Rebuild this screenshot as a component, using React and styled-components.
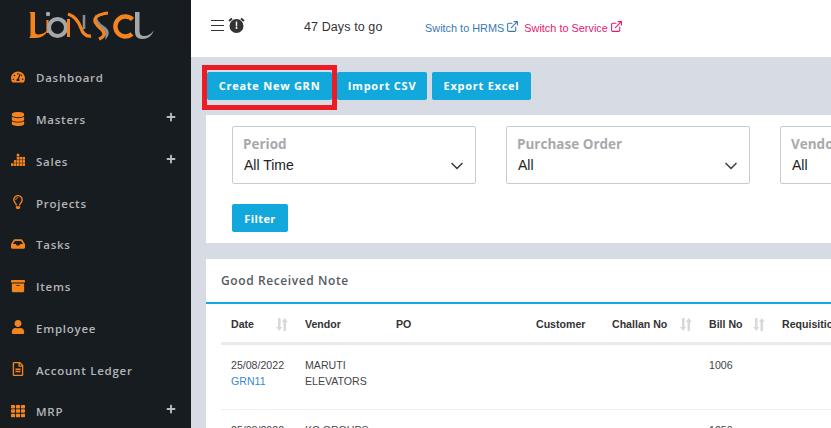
import React from 'react';
import styled, { createGlobalStyle } from 'styled-components';
import {
  FaTachometerAlt, FaDatabase, FaRegLightbulb, FaInbox, FaArchive, FaUser, FaRegFileAlt, FaTh, FaPlus,
} from 'react-icons/fa';
import { FiChevronDown, FiExternalLink } from 'react-icons/fi';

const GlobalStyle = createGlobalStyle`
  html, body { margin: 0; height: 100%; overflow: hidden; }
  body { font-family: "Liberation Sans", Arial, sans-serif; background: #d7dbe3; }
  #root { height: 100%; }
`;

const Page = styled.div`
  display: flex;
  width: 831px;
  height: 428px;
  overflow: hidden;
`;

const Sidebar = styled.aside`
  flex: 0 0 191px;
  background: #171c20;
  overflow: hidden;
`;

const LogoWrap = styled.div`
  height: 57px;
  padding: 11px 0 0 27px;
  box-sizing: border-box;
`;

const MenuList = styled.nav`
  display: flex;
  flex-direction: column;
`;

const MenuItem = styled.div`
  flex: 0 0 41.75px;
  display: flex;
  align-items: center;
  position: relative;
  padding-left: 11px;
  color: #b3b6b9;
  font: 600 11.5px "Open Sans", sans-serif;
  letter-spacing: 0.75px;
  svg.main { color: #f5841f; width: 14px; height: 14px; margin-right: 11px; flex: none; margin-top: -2px; }
`;

const Plus = styled(FaPlus)`
  position: absolute;
  right: 15px;
  top: 13px;
  width: 10px;
  height: 10px;
  color: #b9bcbf;
`;

const Main = styled.main`
  flex: 1;
  min-width: 0;
  display: flex;
  flex-direction: column;
`;

const TopBar = styled.header`
  flex: 0 0 57px;
  background: #fff;
  display: flex;
  align-items: center;
  padding-left: 20px;
`;

const Burger = styled.div`
  width: 13px;
  height: 9px;
  margin-right: 4px;
  border-top: 1px solid #333;
  border-bottom: 1px solid #333;
  position: relative;
  margin-top: -7px;
  &::after {
    content: '';
    position: absolute;
    left: 0;
    right: 0;
    top: 4px;
    height: 1px;
    background: #333;
  }
`;

const Clock = styled.svg`
  width: 17px;
  height: 17px;
  margin-top: -7px;
`;

const DaysLeft = styled.span`
  margin-left: 59px;
  width: 121px;
  font-size: 12.5px;
  letter-spacing: 0.1px;
  color: #333;
  margin-top: -4px;
`;

const SwitchLink = styled.a`
  display: inline-flex;
  align-items: center;
  gap: 2px;
  margin-right: 5px;
  margin-top: -2px;
  font-size: 10.9px;
  color: ${(p) => p.$color};
  svg { width: 13px; height: 13px; margin-top: -2px; }
`;

const Actions = styled.div`
  display: flex;
  gap: 5px;
  padding: 15px 0 15px 16px;
  position: relative;
  height: 28px;
  button { padding-bottom: 2px; letter-spacing: 0.75px; }
`;

const Button = styled.button`
  height: 28px;
  width: ${(p) => p.$w}px;
  padding: 0;
  border: 0;
  border-radius: 2px;
  background: #13a8dc;
  color: #fff;
  font: 700 11px "Open Sans", sans-serif;
  letter-spacing: 0.4px;
  flex: none;
`;

const Highlight = styled.div`
  position: absolute;
  left: 11px;
  top: 8px;
  width: 125px;
  height: 35px;
  border: 5px solid #ed1c24;
  pointer-events: none;
`;

const FilterCard = styled.section`
  margin-left: 15px;
  height: 128px;
  box-sizing: border-box;
  background: #fff;
  padding: 11px 0 0 26px;
`;

const SelectRow = styled.div`
  display: flex;
  gap: 30px;
  margin-bottom: 20px;
`;

const Select = styled.div`
  flex: 0 0 244px;
  height: 58px;
  box-sizing: border-box;
  border: 1px solid #c6cbd8;
  border-radius: 2px;
  padding: 8px 11px;
  position: relative;
  svg {
    position: absolute;
    right: 8px;
    top: 29px;
    width: 20px;
    height: 20px;
    color: #444;
  }
`;

const SelectLabel = styled.div`
  font: 700 13.5px "Open Sans", sans-serif;
  color: #a9a9ad;
  line-height: 18px;
  margin-left: -1px;
  margin-bottom: 2px;
`;

const SelectValue = styled.div`
  font-size: 14px;
  color: #222;
  line-height: 20px;
`;

const TableCard = styled.section`
  margin: 16px 0 0 15px;
  background: #fff;
  flex: 1;
  min-height: 0;
  overflow: hidden;
`;

const CardTitle = styled.h2`
  margin: 0;
  height: 45px;
  box-sizing: border-box;
  border-bottom: 2px solid #13a8dc;
  padding: 13px 0 0 15px;
  font: 600 12px "Open Sans", sans-serif;
  letter-spacing: 0.6px;
  color: #555a62;
`;

const Table = styled.table`
  margin: 0 0 0 15px;
  border-collapse: collapse;
  table-layout: fixed;
  width: 640px;
  font-size: 10.6px;
  color: #444;
  th {
    height: 39px;
    box-sizing: border-box;
    padding: 3px 0 0 10px;
    border-bottom: 3px solid #eaeaea;
    text-align: left;
    font-weight: 700;
    font-size: 10.6px;
    color: #333;
    white-space: nowrap;
    overflow: hidden;
  }
  td {
    height: 66px;
    box-sizing: border-box;
    vertical-align: top;
    padding: 12px 0 0 10px;
    line-height: 16px;
    border-bottom: 1px solid #eee;
  }
`;

const HeadInner = styled.div`
  display: flex;
  align-items: center;
  justify-content: space-between;
  padding-right: ${(p) => p.$pad || 0}px;
`;

const GrnLink = styled.a`
  display: block;
  color: #3a86d8;
`;

function SalesIcon() {
  const columns = [[0, [9.9]], [3, [6.6, 9.9]], [6, [0, 3.3, 6.6, 9.9]], [9, [3.3, 6.6, 9.9]], [12, [3.3, 6.6, 9.9]]];
  return (
    <svg className="main" viewBox="0 0 14.6 13" fill="currentColor">
      {columns.flatMap(([x, ys]) => ys.map((y) => <rect key={`${x}-${y}`} x={x} y={y} width="2.6" height="2.8" />))}
    </svg>
  );
}

function Logo() {
  return (
    <svg width="128" height="32" viewBox="0 0 128 32" fill="none">
      <path d="M2 1 H8 V20 Q8 24 12 23.5 Q17 23 21 19 Q17 27 9 27 H2 Q3.5 26 3.5 24 V3 Q3.5 1.5 2 1 Z" fill="#f5841f" />
      <circle cx="21" cy="3" r="2.2" fill="#a5a7a9" />
      <path d="M20.5 9 V22" stroke="#f5841f" strokeWidth="2.2" />
      <circle cx="30.5" cy="16.5" r="8.5" stroke="#a5a7a9" strokeWidth="4" />
      <path d="M41.5 26 V8" stroke="#f5841f" strokeWidth="3" />
      <path d="M41 3 Q50 6 54 17 Q57 26 64 25" stroke="#f5841f" strokeWidth="3.4" />
      <path d="M57 4 V18" stroke="#8b8d8f" strokeWidth="2.6" />
      <path d="M69 3 Q70 11 77 15 Q86 21 78 29 Q80 22 73 18 Q65 11 69 3 Z" fill="#8b8d8f" />
      <path d="M81 2 Q66 4 68 11 Q70 15 75 19 Q80 25 72 28" stroke="#f5841f" strokeWidth="3" />
      <path d="M105.5 8.5 A 10 10 0 1 0 105 23" stroke="#f5841f" strokeWidth="4.4" />
      <path d="M108 1 H112.5 V20 Q112.5 25 117 25 Q123 25 127 19 Q124 28 115 28 Q108 28 108 21 Z" fill="#a5a7a9" />
    </svg>
  );
}

function AlarmClock() {
  return (
    <Clock viewBox="0 0 17 17">
      <circle cx="8.5" cy="9" r="7" fill="#333" />
      <path d="M1 4 L4 1.5 M16 4 L13 1.5" stroke="#333" strokeWidth="2" />
      <path d="M8.5 4.5 V9.5" stroke="#fff" strokeWidth="1.4" />
      <circle cx="8.5" cy="11" r="1" fill="#fff" />
    </Clock>
  );
}

function SortIcon() {
  return (
    <svg width="12" height="13" viewBox="0 0 12 13" fill="#d8d8d8">
      <path d="M2 0 H4.5 V9 H6.2 L3.2 13 L0.2 9 H2 Z" />
      <path d="M7.5 13 H10 V4 H11.8 L8.8 0 L5.8 4 H7.5 Z" />
    </svg>
  );
}

const menu = [
  { label: 'Dashboard', Icon: FaTachometerAlt },
  { label: 'Masters', Icon: FaDatabase, more: true },
  { label: 'Sales', Icon: SalesIcon, more: true },
  { label: 'Projects', Icon: FaRegLightbulb },
  { label: 'Tasks', Icon: FaInbox },
  { label: 'Items', Icon: FaArchive },
  { label: 'Employee', Icon: FaUser },
  { label: 'Account Ledger', Icon: FaRegFileAlt },
  { label: 'MRP', Icon: FaTh, more: true },
];

const filters = [
  { label: 'Period', value: 'All Time' },
  { label: 'Purchase Order', value: 'All' },
  { label: 'Vendor', value: 'All' },
];

const rows = [
  { date: '25/08/2022', grn: 'GRN11', vendor: ['MARUTI', 'ELEVATORS'], bill: '1006' },
  { date: '25/08/2022', grn: 'GRN10', vendor: ['KC GROUPS'], bill: '1250' },
];

export default function App() {
  return (
    <Page>
      <GlobalStyle />
      <Sidebar>
        <LogoWrap><Logo /></LogoWrap>
        <MenuList>
          {menu.map(({ label, Icon, more }) => (
            <MenuItem key={label}>
              <Icon className="main" />
              {label}
              {more && <Plus />}
            </MenuItem>
          ))}
        </MenuList>
      </Sidebar>
      <Main>
        <TopBar>
          <Burger />
          <AlarmClock />
          <DaysLeft>47 Days to go</DaysLeft>
          <SwitchLink $color="#3a77b8">Switch to HRMS <FiExternalLink /></SwitchLink>
          <SwitchLink $color="#e6186f">Switch to Service <FiExternalLink /></SwitchLink>
        </TopBar>
        <Actions>
          <Button $w={125}>Create New GRN</Button>
          <Button $w={90}>Import CSV</Button>
          <Button $w={99}>Export Excel</Button>
          <Highlight />
        </Actions>
        <FilterCard>
          <SelectRow>
            {filters.map((f) => (
              <Select key={f.label}>
                <SelectLabel>{f.label}</SelectLabel>
                <SelectValue>{f.value}</SelectValue>
                <FiChevronDown />
              </Select>
            ))}
          </SelectRow>
          <Button $w={56}>Filter</Button>
        </FilterCard>
        <TableCard>
          <CardTitle>Good Received Note</CardTitle>
          <Table>
            <colgroup>
              <col width="74" /><col width="91" /><col width="140" /><col width="76" /><col width="97" /><col width="73" /><col width="89" />
            </colgroup>
            <thead>
              <tr>
                <th><HeadInner $pad={7}>Date <SortIcon /></HeadInner></th>
                <th>Vendor</th>
                <th>PO</th>
                <th>Customer</th>
                <th><HeadInner $pad={7}>Challan No <SortIcon /></HeadInner></th>
                <th><HeadInner $pad={7}>Bill No <SortIcon /></HeadInner></th>
                <th>Requisition</th>
              </tr>
            </thead>
            <tbody>
              {rows.map((r) => (
                <tr key={r.grn}>
                  <td>{r.date}<GrnLink>{r.grn}</GrnLink></td>
                  <td>{r.vendor.map((v) => <div key={v}>{v}</div>)}</td>
                  <td />
                  <td />
                  <td />
                  <td>{r.bill}</td>
                  <td />
                </tr>
              ))}
            </tbody>
          </Table>
        </TableCard>
      </Main>
    </Page>
  );
}
